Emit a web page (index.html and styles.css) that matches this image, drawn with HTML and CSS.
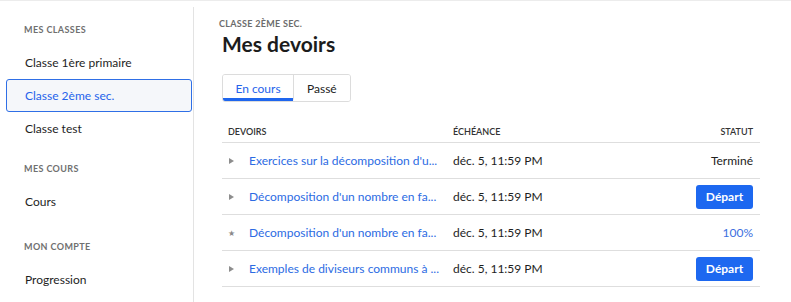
FILE: index.html
```html
<!DOCTYPE html>
<html lang="fr">
<head>
<meta charset="utf-8">
<title>Mes devoirs</title>
<link rel="stylesheet" href="styles.css">
</head>
<body>
<div class="app">
  <nav class="sidebar">
    <div class="section s1">
      <div class="label">Mes classes</div>
      <a class="item">Classe 1ère primaire</a>
      <a class="item active">Classe 2ème sec.</a>
      <a class="item">Classe test</a>
    </div>
    <div class="section s2">
      <div class="label">Mes cours</div>
      <a class="item">Cours</a>
    </div>
    <div class="section s3">
      <div class="label">Mon compte</div>
      <a class="item">Progression</a>
    </div>
  </nav>
  <main class="main">
    <div class="eyebrow">Classe 2ème sec.</div>
    <h1 class="title">Mes devoirs</h1>
    <div class="tabs">
      <button class="tab active">En cours</button>
      <button class="tab">Passé</button>
    </div>
    <div class="table">
      <div class="row head">
        <div class="h-title">Devoirs</div>
        <div>Échéance</div>
        <div class="status">Statut</div>
      </div>
      <div class="row">
        <span class="mark tri"></span>
        <a class="link">Exercices sur la décomposition d'u...</a>
        <div class="date">déc. 5, 11:59 PM</div>
        <div class="status">Terminé</div>
      </div>
      <div class="row">
        <span class="mark tri"></span>
        <a class="link">Décomposition d'un nombre en fa...</a>
        <div class="date">déc. 5, 11:59 PM</div>
        <div class="status"><button class="btn">Départ</button></div>
      </div>
      <div class="row">
        <span class="mark star">★</span>
        <a class="link">Décomposition d'un nombre en fa...</a>
        <div class="date">déc. 5, 11:59 PM</div>
        <div class="status pct">100%</div>
      </div>
      <div class="row">
        <span class="mark tri"></span>
        <a class="link">Exemples de diviseurs communs à ...</a>
        <div class="date">déc. 5, 11:59 PM</div>
        <div class="status"><button class="btn">Départ</button></div>
      </div>
    </div>
  </main>
</div>
</body>
</html>
```

FILE: styles.css
```css
* { box-sizing: border-box; }
html, body { margin: 0; padding: 0; background: #fff; }
body {
  font-family: Lato, "Open Sans", "Liberation Sans", sans-serif;
  color: #222;
  font-size: 12px;
}
.app {
  display: flex;
  border-top: 1px solid #ececec;
  height: 302px;
}
.sidebar {
  width: 194px;
  flex: none;
  margin-top: 6px;
  border-right: 1px solid #e3e3e3;
  padding-top: 15px;
}
.section { display: flex; flex-direction: column; }
.s2 { margin-top: 16px; }
.s3 { margin-top: 21px; }
.label {
  font-size: 9px;
  font-weight: 700;
  letter-spacing: 0.4px;
  text-transform: uppercase;
  color: #707070;
  line-height: 16px;
  padding-left: 24px;
  margin-bottom: 8px;
}
.item {
  display: flex;
  align-items: center;
  height: 33px;
  margin: 0 1px 0 6px;
  padding-left: 18px;
  font-size: 12px;
  color: #1e1e1e;
  border: 1px solid transparent;
  border-radius: 3px;
}
.item.active {
  color: #2563eb;
  background: #f5f7fa;
  border-color: #2f6fe6;
}
.main {
  flex: 1;
  padding: 17px 31px 0 28px;
}
.eyebrow {
  font-size: 9px;
  font-weight: 700;
  letter-spacing: 0.3px;
  text-transform: uppercase;
  color: #6c6c6c;
  line-height: 12px;
  margin-left: -3px;
}
.title {
  margin: 1px 0 0;
  font-size: 21px;
  font-weight: 700;
  line-height: 26px;
  color: #1c1c1c;
}
.tabs {
  display: inline-flex;
  margin-top: 17px;
  border: 1px solid #dcdcdc;
  border-radius: 3px;
  height: 28px;
  overflow: hidden;
}
.tab {
  font-family: inherit;
  font-size: 12px;
  background: #fff;
  border: 0;
  color: #222;
  border-bottom: 3px solid transparent;
  padding: 3px 13px 0;
}
.tab + .tab { border-left: 1px solid #dcdcdc; }
.tab.active { color: #2563eb; border-bottom-color: #1f66ee; width: 70px; padding: 3px 0 0; }
.table { margin-top: 23px; }
.row {
  display: grid;
  grid-template-columns: 27px 204px 1fr auto;
  align-items: center;
  height: 36px;
  border-bottom: 1px solid #dedede;
}
.row.head {
  height: 18px;
  grid-template-columns: 231px 1fr auto;
  font-size: 9px;
  text-transform: uppercase;
  color: #333;
  font-weight: 600;
  align-items: start;
  line-height: 14px;
}
.h-title { padding-left: 6px; }
.status { text-align: right; padding-right: 7px; }
.mark { justify-self: start; margin-left: 7px; color: #8a8a8a; }
.tri {
  width: 0; height: 0;
  border-left: 5px solid #8d8d8d;
  border-top: 3px solid transparent;
  border-bottom: 3px solid transparent;
}
.star { font-size: 8px; margin-left: 6px; }
.link {
  color: #2c6be3;
  white-space: nowrap;
  overflow: hidden;
}
.date { color: #1e1e1e; }
.pct { color: #3b6fe0; }
.btn {
  font-family: inherit;
  font-size: 12px;
  font-weight: 700;
  color: #fff;
  background: #1d68f0;
  border: 0;
  border-radius: 3px;
  width: 57px;
  height: 24px;
  padding: 0;
}
```
